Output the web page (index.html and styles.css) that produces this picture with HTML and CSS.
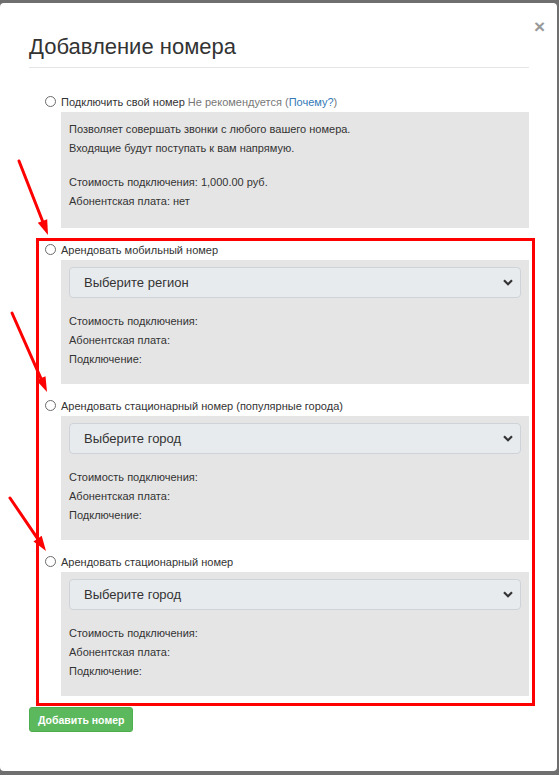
FILE: index.html
```html
<!DOCTYPE html>
<html lang="ru">
<head>
<meta charset="utf-8">
<title>Добавление номера</title>
<link rel="stylesheet" href="styles.css">
</head>
<body>
<div class="modal">
  <div class="modal-header">
    <h2 class="modal-title">Добавление номера</h2>
    <button class="close" type="button" aria-label="Закрыть">×</button>
  </div>

  <form class="options">
    <div class="opt">
      <label class="opt-row">
        <input class="radio" type="radio" name="kind">
        <span>Подключить свой номер <span class="muted">Не рекомендуется (<a href="#">Почему?</a>)</span></span>
      </label>
      <div class="panel panel-text">
        <p>Позволяет совершать звонки с любого вашего номера.<br>Входящие будут поступать к вам напрямую.</p>
        <p>Стоимость подключения: 1,000.00 руб.<br>Абонентская плата: нет</p>
      </div>
    </div>

    <div class="opt">
      <label class="opt-row">
        <input class="radio" type="radio" name="kind">
        <span>Арендовать мобильный номер</span>
      </label>
      <div class="panel panel-choice">
        <div class="select" role="combobox">
          <span>Выберите регион</span>
          <svg class="chev" width="10" height="7" viewBox="0 0 10 7"><path d="M1 1.3 5 5.3 9 1.3" fill="none" stroke="#333" stroke-width="2.2"/></svg>
        </div>
        <div class="info">
          <div>Стоимость подключения:</div>
          <div>Абонентская плата:</div>
          <div>Подключение:</div>
        </div>
      </div>
    </div>

    <div class="opt">
      <label class="opt-row">
        <input class="radio" type="radio" name="kind">
        <span>Арендовать стационарный номер (популярные города)</span>
      </label>
      <div class="panel panel-choice">
        <div class="select" role="combobox">
          <span>Выберите город</span>
          <svg class="chev" width="10" height="7" viewBox="0 0 10 7"><path d="M1 1.3 5 5.3 9 1.3" fill="none" stroke="#333" stroke-width="2.2"/></svg>
        </div>
        <div class="info">
          <div>Стоимость подключения:</div>
          <div>Абонентская плата:</div>
          <div>Подключение:</div>
        </div>
      </div>
    </div>

    <div class="opt">
      <label class="opt-row">
        <input class="radio" type="radio" name="kind">
        <span>Арендовать стационарный номер</span>
      </label>
      <div class="panel panel-choice">
        <div class="select" role="combobox">
          <span>Выберите город</span>
          <svg class="chev" width="10" height="7" viewBox="0 0 10 7"><path d="M1 1.3 5 5.3 9 1.3" fill="none" stroke="#333" stroke-width="2.2"/></svg>
        </div>
        <div class="info">
          <div>Стоимость подключения:</div>
          <div>Абонентская плата:</div>
          <div>Подключение:</div>
        </div>
      </div>
    </div>

    <button class="btn-add" type="button">Добавить номер</button>
  </form>
</div>

<!-- red highlight frame and pointer arrows drawn over the form -->
<svg class="marks" width="559" height="775" viewBox="0 0 559 775">
  <rect x="37.5" y="239.5" width="496" height="465" fill="none" stroke="#f00" stroke-width="3"/>
  <g stroke="#f00" stroke-width="3" stroke-linecap="round">
    <line x1="19" y1="161" x2="42.5" y2="221"/>
    <line x1="12" y1="313" x2="40.9" y2="378.3"/>
    <line x1="10" y1="498" x2="37.6" y2="538.6"/>
  </g>
  <g fill="#f00">
    <polygon points="48,235 47.2,219.2 37.8,222.8"/>
    <polygon points="47,392 45.5,376.3 36.3,380.3"/>
    <polygon points="46,551 41.7,535.8 33.5,541.4"/>
  </g>
</svg>
</body>
</html>
```

FILE: styles.css
```css
html, body {
  margin: 0;
  height: 100%;
}

body {
  background: #6f6f6f;
  overflow: hidden;
  font-family: "Liberation Sans", Arial, sans-serif;
  font-size: 11px;
  color: #333;
}

.modal {
  box-sizing: border-box;
  margin-top: 3px;
  width: 557px;
  height: 768px;
  background: #fff;
  border-radius: 4px;
  padding: 0 28px 0 29px;
}

.modal-header {
  display: flex;
  justify-content: space-between;
  align-items: flex-start;
  padding: 31px 0 7px;
  border-bottom: 1px solid #e5e5e5;
}

.modal-title {
  margin: 0;
  font-size: 22px;
  line-height: 26px;
  font-weight: normal;
  color: #333;
}

.close {
  margin: -17px -16px 0 0;
  padding: 0;
  border: 0;
  background: none;
  font-family: "Liberation Sans", Arial, sans-serif;
  font-size: 19px;
  font-weight: bold;
  line-height: 20px;
  color: #999;
  cursor: pointer;
}

.options {
  margin: 23px 0 0;
}

.opt {
  margin-bottom: 11px;
}

.opt-row {
  display: flex;
  align-items: center;
  gap: 5px;
  height: 21px;
  padding-left: 16px;
  cursor: pointer;
}

.radio {
  appearance: none;
  -webkit-appearance: none;
  box-sizing: border-box;
  width: 11px;
  height: 11px;
  margin: 0;
  border: 1px solid #6b6b6b;
  border-radius: 50%;
  background: #fff;
}

.muted {
  color: #777;
}

.muted a {
  color: #337ab7;
  text-decoration: none;
}

.panel {
  margin-left: 32px;
  background: #e5e5e5;
}

.panel-text {
  padding: 8px 8px 17px;
}

.panel-text p {
  margin: 0;
  line-height: 19px;
}

.panel-text p + p {
  margin-top: 15px;
}

.panel-choice {
  padding: 7px 8px 15px;
}

.select {
  box-sizing: border-box;
  display: flex;
  align-items: center;
  justify-content: space-between;
  height: 31px;
  padding: 0 7px 0 14px;
  background: #e8ebee;
  border: 1px solid #ced3d9;
  border-radius: 4px;
  font-size: 13px;
  color: #333;
}

.chev {
  display: block;
}

.info {
  margin-top: 14px;
  line-height: 19px;
}

.btn-add {
  display: block;
  margin-top: 4px;
  height: 25px;
  padding: 0 8px;
  border: 1px solid #4cae4c;
  border-radius: 3px;
  background: #5cb85c;
  color: #fff;
  font-family: "Liberation Sans", Arial, sans-serif;
  font-size: 10.5px;
  font-weight: bold;
  cursor: pointer;
}

.marks {
  position: absolute;
  top: 0;
  left: 0;
  pointer-events: none;
}
```
